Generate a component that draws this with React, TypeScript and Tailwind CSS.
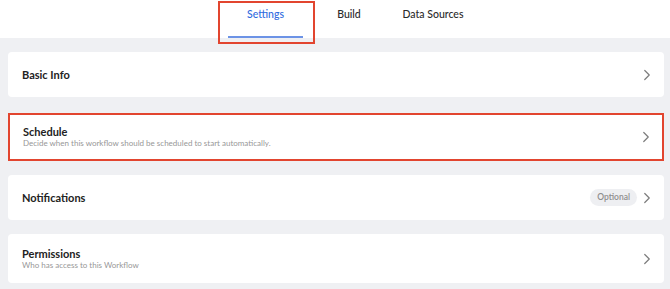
import { ChevronRight } from 'lucide-react'

type Row = {
    title: string
    description?: string
    badge?: string
    highlighted?: boolean
}

const rows: Row[] = [
    { title: 'Basic Info' },
    { title: 'Schedule', description: 'Decide when this workflow should be scheduled to start automatically.', highlighted: true },
    { title: 'Notifications', badge: 'Optional' },
    { title: 'Permissions', description: 'Who has access to this Workflow' },
]

function SettingsRow({ row }: { row: Row }) {
    return (
        <div
            className={
                row.highlighted
                    ? 'flex items-center bg-white h-[48px] pl-[13px] pr-[7px] border-2 border-[#e2452f]'
                    : 'flex items-center bg-white rounded-[4px] pl-[14px] pr-[8px] ' + (row.description ? 'h-[49px]' : 'h-[45px]')
            }
        >
            <div className="flex-1 flex flex-col">
                <span className="text-[11px] leading-[13px] font-bold text-[#222]">{row.title}</span>
                {row.description && (
                    <span className="text-[8px] leading-[11px] text-[#979797]">{row.description}</span>
                )}
            </div>
            {row.badge && (
                <span className="mr-[1px] h-[17px] px-[7px] flex items-center rounded-full bg-[#eeeff2] text-[8.5px] font-semibold text-[#8e8e8e]">
                    {row.badge}
                </span>
            )}
            <ChevronRight className="w-[18px] h-[18px] text-[#7c7c7c]" strokeWidth={1.6} />
        </div>
    )
}

export default function App() {
    return (
        <div className="w-[670px] h-[289px] bg-[#eff0f3] overflow-hidden" style={{ fontFamily: 'Lato, "Open Sans", sans-serif' }}>
            <div className="relative h-[38px] bg-white flex pl-[228px]">
                <div className="relative w-[75px] flex justify-center pt-[7px]">
                    <span className="text-[10.5px] font-medium text-[#2e6be0]">Settings</span>
                    <div className="absolute left-0 right-0 bottom-0 h-[2px] bg-[#6c93e6]" />
                </div>
                <div className="w-[92px] flex justify-center pt-[7px]">
                    <span className="text-[10.5px] font-medium text-[#2a2a2a]">Build</span>
                </div>
                <div className="w-[76px] flex justify-center pt-[7px]">
                    <span className="text-[10.5px] font-medium text-[#2a2a2a]">Data Sources</span>
                </div>
                <div className="absolute left-[218px] top-[1px] w-[97px] h-[43px] border-2 border-[#e2452f] z-10" />
            </div>
            <div className="flex flex-col pt-[14px] pl-[8px] pr-[6px]">
                {rows.map((row, i) => (
                    <div key={row.title} className={i === 1 ? 'mt-[16px]' : i > 1 ? 'mt-[14px]' : ''}>
                        <SettingsRow row={row} />
                    </div>
                ))}
            </div>
        </div>
    )
}
